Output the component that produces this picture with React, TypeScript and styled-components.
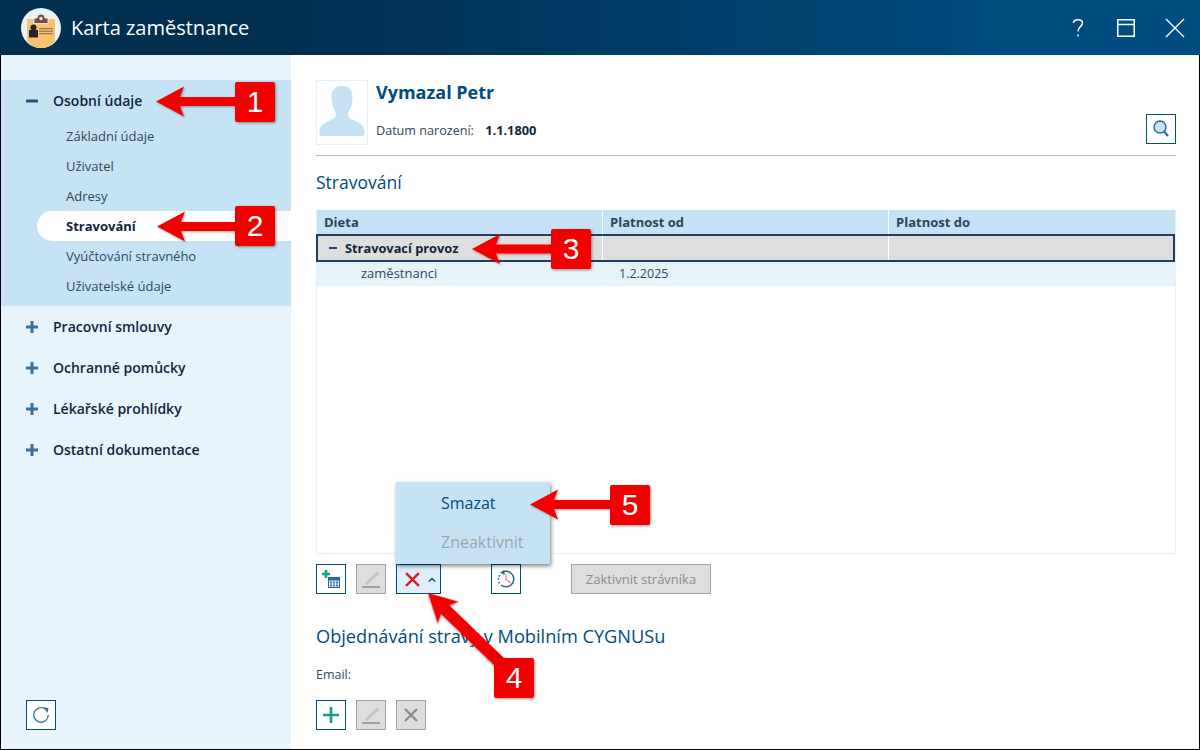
import styled, { createGlobalStyle } from "styled-components";

const GlobalStyle = createGlobalStyle`
  html, body { margin: 0; padding: 0; background: #fff; }
  * { box-sizing: border-box; }
  body { font-family: "Open Sans", "Liberation Sans", sans-serif; }
`;

const subItems = ["Základní údaje", "Uživatel", "Adresy", "Stravování", "Vyúčtování stravného", "Uživatelské údaje"];
const otherGroups = ["Pracovní smlouvy", "Ochranné pomůcky", "Lékařské prohlídky", "Ostatní dokumentace"];

const AppLogo = () => (
  <svg width="40" height="40" viewBox="0 0 40 40">
    <defs>
      <clipPath id="logoCircle">
        <circle cx="20" cy="20" r="20" />
      </clipPath>
    </defs>
    <circle cx="20" cy="20" r="20" fill="#e9f3f8" />
    <g clipPath="url(#logoCircle)">
      <rect x="6" y="11" width="28" height="30" rx="1" fill="#f9c272" />
    </g>
    <path d="M13 15.500 V11.500 q0 -1.500 1.500 -1.500 h1.500 a4 4 0 0 1 8 0 h1.500 q1.500 0 1.500 1.500 V15.500 z" fill="#7c4a45" stroke="#fff" strokeWidth="0.800" />
    <circle cx="20" cy="10.500" r="1.700" fill="#f6e4d0" />
    <circle cx="12.500" cy="19.500" r="3" fill="#222" />
    <rect x="8" y="22" width="9" height="7.500" fill="#222" />
    <path d="M18 20.700 h14 M18 23.200 h14 M18 25.700 h14" stroke="#8d6238" strokeWidth="1" />
  </svg>
);

const HelpIcon = () => (
  <svg width="15" height="20" viewBox="0 0 15 20" fill="none" stroke="#fff" strokeWidth="1.500">
    <path d="M1.500 5 C1.500 0.500 10.500 0.500 10.500 5 C10.500 8.500 6 8.500 6 13.500" />
    <path d="M6 16.500 v2" />
  </svg>
);

const MaximizeIcon = () => (
  <svg width="18" height="18" viewBox="0 0 18 18" fill="none" stroke="#fff">
    <rect x="0.750" y="0.750" width="16.500" height="16.500" strokeWidth="1.500" />
    <path d="M1 5.500 h16" strokeWidth="1.500" />
  </svg>
);

const CloseIcon = () => (
  <svg width="20" height="20" viewBox="0 0 20 20" fill="none" stroke="#fff" strokeWidth="1.400">
    <path d="M1 1 L19 19 M19 1 L1 19" />
  </svg>
);

const Silhouette = () => (
  <svg width="46" height="50" viewBox="0 0 46 50">
    <path
      d="M23 0 C31 0 34 5 33.500 13 C33.300 18 32 21 30 25 C28.500 29 29 31.500 33 33.500 C39 36 46 38 45.500 47 C45.500 49 45 50 43 50 L3 50 C1 50 0.500 49 0.500 47 C0 38 7 36 13 33.500 C17 31.500 17.500 29 16 25 C14 21 12.700 18 12.500 13 C12 5 15 0 23 0 Z"
      fill="#c5e3f4"
    />
  </svg>
);

const SearchIcon = () => (
  <svg width="16" height="18" viewBox="0 0 16 18">
    <circle cx="7" cy="7" r="6" fill="#c5e3f4" stroke="#2f6592" strokeWidth="1.400" />
    <path d="M11 11.500 L15 16" stroke="#2f6592" strokeWidth="2.200" />
  </svg>
);

const AddCalendarIcon = () => (
  <svg width="20" height="20" viewBox="0 0 20 20">
    <path d="M5 1 V9 M1 5 H9" stroke="#14a08a" strokeWidth="2.600" />
    <rect x="7" y="8" width="12" height="11" fill="#2f6592" />
    <rect x="8" y="11.500" width="10" height="6.500" fill="#dcecf6" />
    <path d="M9 12.500 h2 v2 h-2z M12 12.500 h2 v2 h-2z M15 12.500 h2 v2 h-2z M9 15.500 h2 v2 h-2z M12 15.500 h2 v2 h-2z M15 15.500 h2 v2 h-2z" fill="#3f77a5" />
  </svg>
);

const EditIcon = () => (
  <svg width="20" height="20" viewBox="0 0 20 20" fill="none">
    <path d="M5 15 L17 3.500" stroke="#c4c4c4" strokeWidth="3" />
    <path d="M1 18 h18" stroke="#a0a0a0" strokeWidth="2" />
  </svg>
);

const CrossIcon = ({ $color, $size }: { $color: string; $size: number }) => (
  <svg width={$size} height={$size} viewBox="0 0 14 14" fill="none" stroke={$color} strokeWidth="2.400">
    <path d="M1 1 L13 13 M13 1 L1 13" />
  </svg>
);

const ChevronUp = () => (
  <svg width="8" height="5" viewBox="0 0 8 5" fill="#004c7f">
    <path d="M0 4.600 L4 0.600 L8 4.600 L6.500 4.800 L4 2.600 L1.500 4.800 Z" />
  </svg>
);

const HistoryIcon = () => (
  <svg width="18" height="18" viewBox="0 0 18 18" fill="none">
    <path d="M5.500 2 A7.800 7.800 0 1 1 4 15" stroke="#2f6592" strokeWidth="1.500" />
    <path d="M1.300 9.500 a7.800 7.800 0 0 1 2 -5.200 M1.800 12 l1.200 2" stroke="#2f6592" strokeWidth="1.500" strokeDasharray="1.600 1.400" />
    <path d="M9 4.500 V9.500 L13.500 13" stroke="#e58585" strokeWidth="1.300" />
    <path d="M7.500 0 L3 2.500 L7.500 5 Z" fill="#2f6592" />
  </svg>
);

const PlusIcon = () => (
  <svg width="18" height="18" viewBox="0 0 18 18" stroke="#14a08a" strokeWidth="2.600">
    <path d="M9 1 V17 M1 9 H17" />
  </svg>
);

const RefreshIcon = () => (
  <svg width="18" height="18" viewBox="0 0 18 18" fill="none">
    <path d="M13.500 3.200 A7.300 7.300 0 1 0 16.300 9" stroke="#3a6f9c" strokeWidth="1.300" />
    <path d="M11.500 1 L16.500 2.200 L15.500 7 Z" fill="#3a6f9c" />
  </svg>
);

const Arrow = ({ x, y, length, angle, half = 4.500 }: { x: number; y: number; length: number; angle: number; half?: number }) => (
  <g transform={`translate(${x} ${y}) rotate(${angle})`} filter="url(#arrowShadow)">
    <path d={`M0 0 L28 -15 L24 ${-half} L${length} ${-half} L${length} ${half} L24 ${half} L28 15 Z`} fill="#f20000" />
  </g>
);

const Annotations = () => (
  <>
    <Overlay width="1200" height="750" viewBox="0 0 1200 750">
      <defs>
        <filter id="arrowShadow" x="-20%" y="-50%" width="140%" height="200%">
          <feDropShadow dx="1" dy="1" stdDeviation="1" floodColor="#000" floodOpacity="0.350" />
        </filter>
      </defs>
      <Arrow x={156} y={101.500} length={85} angle={0} />
      <Arrow x={157} y={226.500} length={85} angle={0} />
      <Arrow x={472} y={249} length={85} angle={0} />
      <Arrow x={530} y={504.500} length={85} angle={0} />
      <Arrow x={428} y={593} length={110} angle={44} half={6} />
    </Overlay>
    <Badge $left={235} $top={82}>1</Badge>
    <Badge $left={235} $top={206}>2</Badge>
    <Badge $left={551} $top={229}>3</Badge>
    <Badge $left={494} $top={658}>4</Badge>
    <Badge $left={610} $top={485}>5</Badge>
  </>
);

const App = () => (
  <Frame>
    <GlobalStyle />
    <Header>
      <Brand>
        <AppLogo />
        <AppTitle>Karta zaměstnance</AppTitle>
      </Brand>
      <WindowControls>
        <HelpIcon />
        <MaximizeIcon />
        <CloseIcon />
      </WindowControls>
    </Header>

    <Body>
      <Sidebar>
        <OpenGroup>
          <GroupHead>
            <Toggle>
              <svg width="12" height="12" viewBox="0 0 12 12"><path d="M0 6 H12" stroke="#1f5685" strokeWidth="3" /></svg>
            </Toggle>
            Osobní údaje
          </GroupHead>
          {subItems.map((item) => (
            <SubItem key={item} $active={item === "Stravování"}>{item}</SubItem>
          ))}
        </OpenGroup>
        {otherGroups.map((group) => (
          <GroupHead key={group}>
            <Toggle>
              <svg width="12" height="12" viewBox="0 0 12 12"><path d="M0 6 H12 M6 0 V12" stroke="#3a6f9c" strokeWidth="3" /></svg>
            </Toggle>
            {group}
          </GroupHead>
        ))}
        <SidebarFooter>
          <IconButton><RefreshIcon /></IconButton>
        </SidebarFooter>
      </Sidebar>

      <Main>
        <Person>
          <Photo><Silhouette /></Photo>
          <PersonInfo>
            <PersonName>Vymazal Petr</PersonName>
            <BirthRow>
              Datum narození: <strong>1.1.1800</strong>
            </BirthRow>
          </PersonInfo>
          <IconButton><SearchIcon /></IconButton>
        </Person>

        <SectionTitle>Stravování</SectionTitle>

        <Table>
          <HeadRow>
            <HeadCell>Dieta</HeadCell>
            <HeadCell>Platnost od</HeadCell>
            <HeadCell>Platnost do</HeadCell>
          </HeadRow>
          <SelectedRow>
            <SelectedCell>
              <svg width="8" height="8" viewBox="0 0 8 8"><path d="M0 4 H8" stroke="#1f4568" strokeWidth="2" /></svg>
              Stravovací provoz
            </SelectedCell>
            <SelectedCell />
            <SelectedCell />
          </SelectedRow>
          <DataRow>
            <NameCell>zaměstnanci</NameCell>
            <DateCell>1.2.2025</DateCell>
            <div />
          </DataRow>
        </Table>

        <Toolbar>
          <IconButton><AddCalendarIcon /></IconButton>
          <IconButton $disabled><EditIcon /></IconButton>
          <DropdownAnchor>
            <DeleteButton>
              <CrossIcon $color="#d2232a" $size={15} />
              <ChevronUp />
            </DeleteButton>
            <Menu>
              <MenuItem>Smazat</MenuItem>
              <MenuItem $disabled>Zneaktivnit</MenuItem>
            </Menu>
          </DropdownAnchor>
          <HistoryButton><HistoryIcon /></HistoryButton>
          <ActivateButton>Zaktivnit strávníka</ActivateButton>
        </Toolbar>

        <MobileTitle>Objednávání stravy v Mobilním CYGNUSu</MobileTitle>
        <EmailLabel>Email:</EmailLabel>
        <BottomToolbar>
          <IconButton><PlusIcon /></IconButton>
          <IconButton $disabled><EditIcon /></IconButton>
          <IconButton $disabled><CrossIcon $color="#8c8c8c" $size={14} /></IconButton>
        </BottomToolbar>
      </Main>
    </Body>

    <Annotations />
  </Frame>
);

export default App;

const Frame = styled.div`
  position: relative;
  width: 1200px;
  height: 750px;
  overflow: hidden;
  background: #fff;
  display: flex;
  flex-direction: column;
  border-bottom: 1px solid #000;
`;

const Header = styled.header`
  height: 55px;
  flex: none;
  display: flex;
  align-items: center;
  justify-content: space-between;
  padding: 0 15px 0 21px;
  background: linear-gradient(90deg, #002f50 0%, #002f50 25%, #004c80 85%);
`;

const Brand = styled.div`
  display: flex;
  align-items: center;
  gap: 10px;
`;

const AppTitle = styled.h1`
  margin: 0;
  font-size: 20px;
  font-weight: 400;
  color: #fff;
`;

const WindowControls = styled.div`
  display: flex;
  align-items: center;
  gap: 30px;
`;

const Body = styled.div`
  flex: 1;
  display: flex;
  min-height: 0;
  border-left: 1px solid #000;
  border-right: 1px solid #000;
`;

const Sidebar = styled.aside`
  width: 290px;
  flex: none;
  display: flex;
  flex-direction: column;
  padding-top: 25px;
  padding-bottom: 19px;
  background: #e8f4fb;
`;

const OpenGroup = styled.section`
  padding-bottom: 5px;
  background: #c5e3f4;
`;

const GroupHead = styled.div`
  height: 41px;
  display: flex;
  align-items: center;
  gap: 15px;
  padding-left: 25px;
  font-size: 14px;
  font-weight: 600;
  color: #10263c;
`;

const Toggle = styled.span`
  display: flex;
  width: 12px;
  justify-content: center;
`;

const SubItem = styled.div<{ $active?: boolean }>`
  height: 30px;
  display: flex;
  align-items: center;
  margin-left: ${(p) => (p.$active ? "36px" : "0")};
  padding-left: ${(p) => (p.$active ? "29px" : "65px")};
  border-radius: ${(p) => (p.$active ? "15px 0 0 15px" : "0")};
  background: ${(p) => (p.$active ? "#fff" : "transparent")};
  font-size: 13px;
  font-weight: ${(p) => (p.$active ? 700 : 400)};
  color: ${(p) => (p.$active ? "#10263c" : "#33475b")};
`;

const SidebarFooter = styled.div`
  margin-top: auto;
  padding-left: 25px;
`;

const IconButton = styled.button<{ $disabled?: boolean }>`
  width: 30px;
  height: 30px;
  flex: none;
  padding: 0;
  display: flex;
  align-items: center;
  justify-content: center;
  border: 1px solid ${(p) => (p.$disabled ? "#a3a3a3" : "#004c7f")};
  background: ${(p) => (p.$disabled ? "#dedede" : "#fff")};
`;

const Main = styled.main`
  flex: 1;
  min-width: 0;
  display: flex;
  flex-direction: column;
  padding: 25px 23px 0 25px;
`;

const Person = styled.div`
  height: 76px;
  flex: none;
  display: flex;
  align-items: flex-start;
  border-bottom: 1px solid #bbb;

  ${IconButton} {
    margin-top: 34px;
  }
`;

const Photo = styled.div`
  width: 52px;
  height: 65px;
  display: flex;
  align-items: flex-end;
  justify-content: center;
  padding-bottom: 8px;
  border: 1px solid #e3f0f8;
`;

const PersonInfo = styled.div`
  flex: 1;
  padding-left: 8px;
`;

const PersonName = styled.div`
  height: 24px;
  line-height: 24px;
  font-size: 18px;
  font-weight: 700;
  color: #004c7f;
`;

const BirthRow = styled.div`
  margin-top: 18px;
  font-size: 12.600px;
  line-height: 16px;
  color: #33475b;

  strong {
    margin-left: 8px;
    font-size: 12.800px;
    font-weight: 700;
    color: #10263c;
  }
`;

const SectionTitle = styled.h2`
  height: 24px;
  margin: 14px 0 16px;
  font-size: 17.500px;
  line-height: 24px;
  font-weight: 400;
  color: #004c7f;
`;

const Table = styled.div`
  height: 344px;
  flex: none;
  border: 1px solid #e6eef8;
  border-top: 0;
`;

const HeadRow = styled.div`
  height: 24px;
  display: grid;
  grid-template-columns: 285px 286px 1fr;
  background: #c5e3f4;
`;

const HeadCell = styled.div`
  display: flex;
  align-items: center;
  padding-left: 7px;
  font-size: 13px;
  font-weight: 700;
  color: #2c4560;
  border-left: 1px solid #fff;

  &:first-child {
    border-left: 0;
  }
`;

const SelectedRow = styled.div`
  height: 28px;
  margin-left: -1px;
  display: grid;
  grid-template-columns: 284px 286px 1fr;
  background: #dedede;
  border: 2px solid #1f3f5f;
`;

const SelectedCell = styled.div`
  display: flex;
  align-items: center;
  gap: 8px;
  padding-left: 11px;
  font-size: 12.800px;
  font-weight: 700;
  color: #10263c;
  border-left: 1px solid #fff;

  &:first-child {
    border-left: 0;
  }
`;

const DataRow = styled.div`
  height: 24px;
  padding-bottom: 2px;
  display: grid;
  grid-template-columns: 285px 286px 1fr;
  align-items: center;
  background: #e6f3fa;
  font-size: 13px;
  color: #33475b;
`;

const NameCell = styled.div`
  padding-left: 44px;
`;

const DateCell = styled.div`
  padding-left: 17px;
  font-size: 12.500px;
`;

const Toolbar = styled.div`
  height: 30px;
  flex: none;
  margin-top: 10px;
  display: flex;
  gap: 10px;
`;

const DropdownAnchor = styled.div`
  position: relative;
  width: 45px;
`;

const DeleteButton = styled.button`
  width: 45px;
  height: 30px;
  padding: 0 0 0 3px;
  display: flex;
  align-items: center;
  justify-content: center;
  gap: 8px;
  border: 1px solid #004c7f;
  background: #deeffa;
`;

const Menu = styled.div`
  position: absolute;
  left: 0;
  bottom: 30px;
  width: 154px;
  height: 82px;
  padding-top: 2px;
  display: flex;
  flex-direction: column;
  gap: 1px;
  background: #c5e3f4;
  box-shadow: 1px 2px 4px rgba(0, 0, 0, 0.5);
`;

const MenuItem = styled.div<{ $disabled?: boolean }>`
  height: 38px;
  display: flex;
  align-items: center;
  padding-left: 45px;
  font-size: 16px;
  color: ${(p) => (p.$disabled ? "#9aa6ae" : "#004c7f")};
`;

const HistoryButton = styled(IconButton)`
  margin-left: 40px;
`;

const ActivateButton = styled.button`
  width: 140px;
  height: 30px;
  margin-left: 40px;
  padding: 0;
  border: 1px solid #a3a3a3;
  background: #dedede;
  font-family: inherit;
  font-size: 13px;
  color: #8c8c8c;
`;

const MobileTitle = styled.h2`
  height: 24px;
  margin: 30px 0 0;
  font-size: 18.200px;
  line-height: 24px;
  font-weight: 400;
  color: #004c7f;
`;

const EmailLabel = styled.div`
  height: 16px;
  margin-top: 19px;
  font-size: 12.500px;
  line-height: 16px;
  color: #33475b;
`;

const BottomToolbar = styled.div`
  height: 30px;
  flex: none;
  margin-top: 17px;
  display: flex;
  gap: 10px;
`;

const Overlay = styled.svg`
  position: absolute;
  left: 0;
  top: 0;
  pointer-events: none;
`;

const Badge = styled.div<{ $left: number; $top: number }>`
  position: absolute;
  left: ${(p) => p.$left}px;
  top: ${(p) => p.$top}px;
  width: 40px;
  height: 40px;
  display: flex;
  align-items: center;
  justify-content: center;
  border-radius: 2px;
  background: #f20000;
  box-shadow: 1px 1px 3px rgba(0, 0, 0, 0.4);
  font-family: "Liberation Sans", Arial, sans-serif;
  font-size: 30px;
  color: #fff;
`;
